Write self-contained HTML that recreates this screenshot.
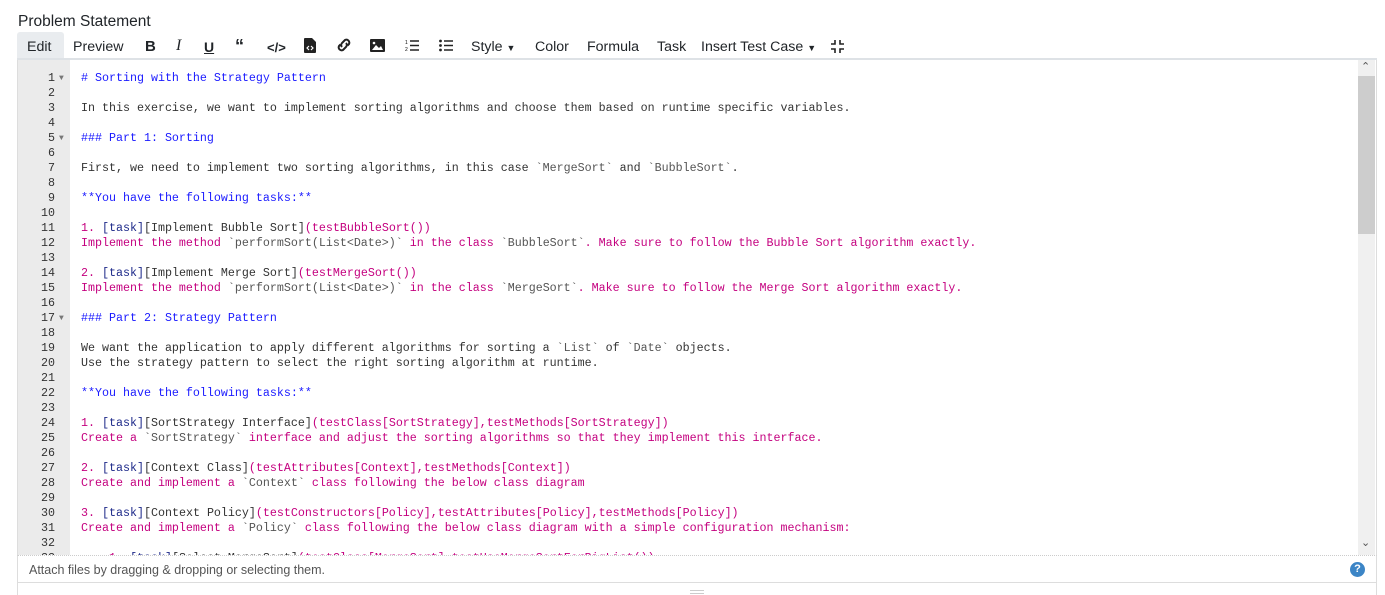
<!DOCTYPE html>
<html><head><meta charset="utf-8"><style>
*{box-sizing:border-box;margin:0;padding:0}
body{width:1385px;height:595px;background:#fff;font-family:"Liberation Sans",sans-serif;color:#212529;position:relative;overflow:hidden}
.abs{position:absolute}
.title{left:18px;top:13px;font-size:15.5px;color:#212529}
.tb{font-size:14.2px;top:39px;color:#212529;white-space:nowrap}
.tab{left:17px;top:32px;width:47px;height:27px;background:#e9ecef;border-radius:3px 3px 0 0}
.line{left:17px;top:58px;width:1360px;height:2px;background:#dee2e6}
.box{left:17px;top:60px;width:1360px;height:495px;border-left:1px solid #ddd;border-right:1px solid #ddd;overflow:hidden}
.gut{left:18px;top:60px;width:52px;height:495px;background:#ebebeb}
.code{left:0;top:71px;font-family:"Liberation Mono",monospace;font-size:11.67px;line-height:15px;white-space:pre}
.ln{position:absolute;left:18px;width:37px;text-align:right;color:#333}
.fd{position:absolute;left:59px;color:#777;font-size:8px}
.tx{position:absolute;left:81px;color:#333}
.h{color:#1a1aff}.p{color:#c4007f}.t{color:#1e2a8a}.g{color:#555}
.sb{left:1358px;top:60px;width:17px;height:495px;background:#f0f0f0}
.th{left:1358px;top:76px;width:17px;height:158px;background:#cdcdcd}
.foot{left:17px;top:555px;width:1360px;height:28px;border:1px solid #ddd;border-top:1px dotted #ccc;font-size:12.5px;color:#555;padding:7px 0 0 11px}
.q{left:1350px;top:562px;width:15px;height:15px;border-radius:50%;background:#3c85c6;color:#fff;font-size:11px;font-weight:bold;text-align:center;line-height:15px}
</style></head><body>
<div class="abs title">Problem Statement</div>
<div class="abs tab"></div>
<div class="abs line"></div>
<div class="abs tb" style="left:27px">Edit</div>
<div class="abs tb" style="left:73px">Preview</div>
<div class="abs tb" style="left:145px;font-weight:bold;font-size:15px;top:38px">B</div>
<div class="abs tb" style="left:176px;font-style:italic;font-family:'Liberation Serif',serif;font-size:16px;top:37px">I</div>
<div class="abs tb" style="left:204px;text-decoration:underline;font-weight:bold;font-size:14px">U</div>
<div class="abs tb" style="left:235px;font-weight:bold;font-size:18px;top:36px">&#8220;</div>
<div class="abs tb" style="left:267px;font-weight:bold;font-size:13px;top:40px">&lt;/&gt;</div>
<svg class="abs" style="left:304px;top:38px" width="12" height="15" viewBox="0 0 12 15"><path d="M0 1q0-1 1-1h7l4 4v10q0 1-1 1H1q-1 0-1-1z" fill="#222"/><path d="M5 8l-2 2 2 2M7 8l2 2-2 2" stroke="#fff" stroke-width="1.2" fill="none"/></svg>
<svg class="abs" style="left:335px;top:38px" width="18" height="14" viewBox="0 0 18 14"><path d="M7 9a3 3 0 0 1 0-4l3-3a3 3 0 0 1 4 4l-1.5 1.5M11 5a3 3 0 0 1 0 4l-3 3a3 3 0 0 1-4-4l1.5-1.5" stroke="#222" stroke-width="2" fill="none"/></svg>
<svg class="abs" style="left:370px;top:39px" width="15" height="13" viewBox="0 0 15 13"><rect width="15" height="13" rx="1" fill="#222"/><path d="M2 11l4-5 3 3 2-2 2 4z" fill="#fff"/><circle cx="4" cy="4" r="1.3" fill="#fff"/></svg>
<svg class="abs" style="left:405px;top:39px" width="14" height="13" viewBox="0 0 14 13"><text x="0" y="5" font-size="5" font-family="Liberation Sans">1</text><text x="0" y="12" font-size="5" font-family="Liberation Sans">2</text><path d="M5 2h9M5 6.5h9M5 11h9" stroke="#222" stroke-width="1.6"/></svg>
<svg class="abs" style="left:439px;top:39px" width="14" height="13" viewBox="0 0 14 13"><circle cx="1.5" cy="2" r="1.4" fill="#222"/><circle cx="1.5" cy="6.5" r="1.4" fill="#222"/><circle cx="1.5" cy="11" r="1.4" fill="#222"/><path d="M5 2h9M5 6.5h9M5 11h9" stroke="#222" stroke-width="1.6"/></svg>
<div class="abs tb" style="left:471px">Style <span style="font-size:9px">&#9660;</span></div>
<div class="abs tb" style="left:535px">Color</div>
<div class="abs tb" style="left:587px">Formula</div>
<div class="abs tb" style="left:657px">Task</div>
<div class="abs tb" style="left:701px">Insert Test Case <span style="font-size:9px">&#9660;</span></div>
<svg class="abs" style="left:831px;top:40px" width="13" height="13" viewBox="0 0 13 13"><path d="M4 0v4H0M9 0v4h4M4 13V9H0M9 13V9h4" stroke="#222" stroke-width="1.6" fill="none"/></svg>

<div class="abs box"></div>
<div class="abs gut"></div>
<div class="abs sb"></div>
<div class="abs th"></div>
<div class="abs" style="left:1361px;top:60px;font-size:11px;color:#555">&#8963;</div>
<div class="abs" style="left:1361px;top:536px;font-size:11px;color:#555">&#8964;</div>
<div class="abs code" id="c">
<div class="ln" style="top:0">1</div><div class="fd" style="top:0">&#9660;</div><div class="tx h" style="top:0"># Sorting with the Strategy Pattern</div>
<div class="ln" style="top:15px">2</div>
<div class="ln" style="top:30px">3</div><div class="tx" style="top:30px">In this exercise, we want to implement sorting algorithms and choose them based on runtime specific variables.</div>
<div class="ln" style="top:45px">4</div>
<div class="ln" style="top:60px">5</div><div class="fd" style="top:60px">&#9660;</div><div class="tx h" style="top:60px">### Part 1: Sorting</div>
<div class="ln" style="top:75px">6</div>
<div class="ln" style="top:90px">7</div><div class="tx" style="top:90px">First, we need to implement two sorting algorithms, in this case <span class="g">`MergeSort`</span> and <span class="g">`BubbleSort`</span>.</div>
<div class="ln" style="top:105px">8</div>
<div class="ln" style="top:120px">9</div><div class="tx h" style="top:120px">**You have the following tasks:**</div>
<div class="ln" style="top:135px">10</div>
<div class="ln" style="top:150px">11</div><div class="tx" style="top:150px"><span class="p">1. </span><span class="t">[task]</span>[Implement Bubble Sort]<span class="p">(testBubbleSort())</span></div>
<div class="ln" style="top:165px">12</div><div class="tx p" style="top:165px">Implement the method <span class="g">`performSort(List&lt;Date&gt;)`</span> in the class <span class="g">`BubbleSort`</span>. Make sure to follow the Bubble Sort algorithm exactly.</div>
<div class="ln" style="top:180px">13</div>
<div class="ln" style="top:195px">14</div><div class="tx" style="top:195px"><span class="p">2. </span><span class="t">[task]</span>[Implement Merge Sort]<span class="p">(testMergeSort())</span></div>
<div class="ln" style="top:210px">15</div><div class="tx p" style="top:210px">Implement the method <span class="g">`performSort(List&lt;Date&gt;)`</span> in the class <span class="g">`MergeSort`</span>. Make sure to follow the Merge Sort algorithm exactly.</div>
<div class="ln" style="top:225px">16</div>
<div class="ln" style="top:240px">17</div><div class="fd" style="top:240px">&#9660;</div><div class="tx h" style="top:240px">### Part 2: Strategy Pattern</div>
<div class="ln" style="top:255px">18</div>
<div class="ln" style="top:270px">19</div><div class="tx" style="top:270px">We want the application to apply different algorithms for sorting a <span class="g">`List`</span> of <span class="g">`Date`</span> objects.</div>
<div class="ln" style="top:285px">20</div><div class="tx" style="top:285px">Use the strategy pattern to select the right sorting algorithm at runtime.</div>
<div class="ln" style="top:300px">21</div>
<div class="ln" style="top:315px">22</div><div class="tx h" style="top:315px">**You have the following tasks:**</div>
<div class="ln" style="top:330px">23</div>
<div class="ln" style="top:345px">24</div><div class="tx" style="top:345px"><span class="p">1. </span><span class="t">[task]</span>[SortStrategy Interface]<span class="p">(testClass[SortStrategy],testMethods[SortStrategy])</span></div>
<div class="ln" style="top:360px">25</div><div class="tx p" style="top:360px">Create a <span class="g">`SortStrategy`</span> interface and adjust the sorting algorithms so that they implement this interface.</div>
<div class="ln" style="top:375px">26</div>
<div class="ln" style="top:390px">27</div><div class="tx" style="top:390px"><span class="p">2. </span><span class="t">[task]</span>[Context Class]<span class="p">(testAttributes[Context],testMethods[Context])</span></div>
<div class="ln" style="top:405px">28</div><div class="tx p" style="top:405px">Create and implement a <span class="g">`Context`</span> class following the below class diagram</div>
<div class="ln" style="top:420px">29</div>
<div class="ln" style="top:435px">30</div><div class="tx" style="top:435px"><span class="p">3. </span><span class="t">[task]</span>[Context Policy]<span class="p">(testConstructors[Policy],testAttributes[Policy],testMethods[Policy])</span></div>
<div class="ln" style="top:450px">31</div><div class="tx p" style="top:450px">Create and implement a <span class="g">`Policy`</span> class following the below class diagram with a simple configuration mechanism:</div>
<div class="ln" style="top:465px">32</div>
<div class="ln" style="top:480px">33</div><div class="tx" style="top:480px">    <span class="p">1. </span><span class="t">[task]</span>[Select MergeSort]<span class="p">(testClass[MergeSort],testUseMergeSortForBigList())</span></div>
</div>
<div class="abs" style="left:0;top:555px;width:1385px;height:40px;background:#fff"></div>
<div class="abs foot">Attach files by dragging &amp; dropping or selecting them.</div>
<div class="abs q">?</div>
<div class="abs" style="left:17px;top:583px;width:1px;height:12px;background:#ddd"></div>
<div class="abs" style="left:1376px;top:583px;width:1px;height:12px;background:#ddd"></div>
<div class="abs" style="left:690px;top:590px;width:14px;height:1px;background:#ccc"></div>
<div class="abs" style="left:690px;top:593px;width:14px;height:1px;background:#ccc"></div>
<style>#c{height:484px;width:1358px;overflow:hidden}</style>
</body></html>
